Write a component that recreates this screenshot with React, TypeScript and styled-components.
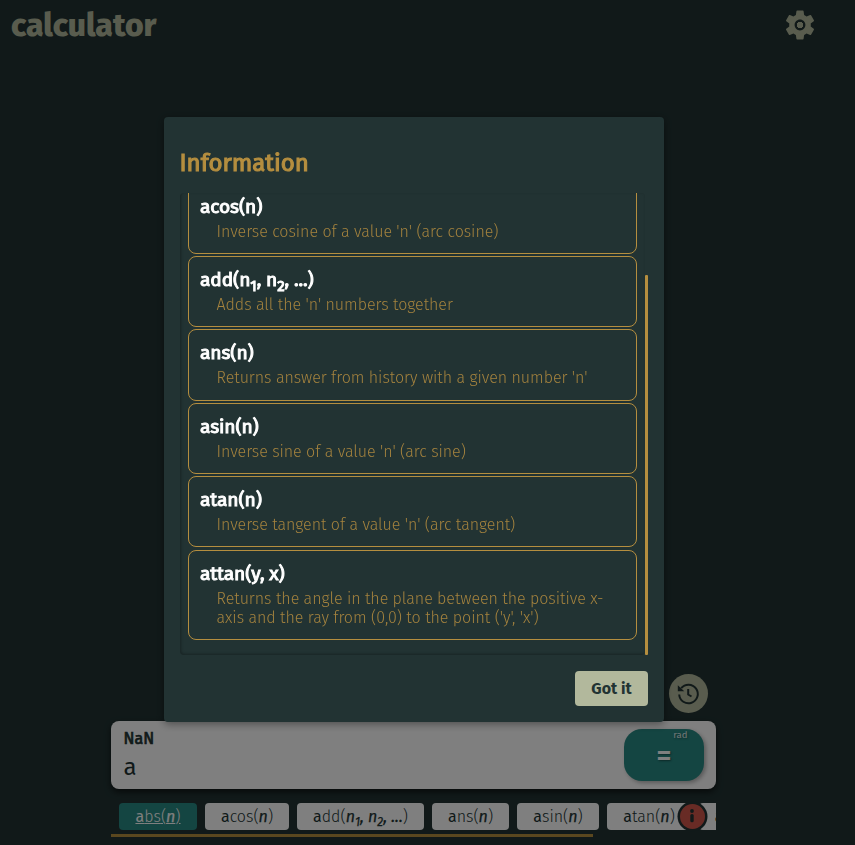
import React from 'react';
import styled, { createGlobalStyle } from 'styled-components';
import { MdSettings } from 'react-icons/md';

const palette = {
  bg: '#223333',
  gold: '#b58e3f',
  cream: '#b2b89c',
  teal: '#288a84',
  white: '#ffffff',
  red: '#d0564a',
};

const GlobalStyle = createGlobalStyle`
  * { box-sizing: border-box; }
  body {
    margin: 0;
    overflow: hidden;
    background: ${palette.bg};
    color: ${palette.bg};
    font-family: "Fira Sans", "Noto Sans", sans-serif;
    font-size: 16px;
  }
  button { font: inherit; border: 0; padding: 0; margin: 0; }
`;

const Page = styled.div`
  height: 845px;
  display: flex;
  flex-direction: column;
  justify-content: space-between;
`;

const Header = styled.header`
  display: flex;
  justify-content: space-between;
  padding: 6px 37px 0 11px;
`;

const Logo = styled.h1`
  margin: 0;
  font-size: 32px;
  line-height: 38px;
  font-weight: 800;
  color: ${palette.cream};
`;

const SettingsButton = styled.button`
  display: grid;
  place-items: center;
  width: 36px;
  height: 36px;
  margin-top: 1px;
  background: radial-gradient(circle at center, ${palette.cream} 3px, transparent 3.5px);
  color: ${palette.cream};
`;

const Calculator = styled.main`
  width: 605px;
  margin-left: 111px;
  display: flex;
  flex-direction: column;
  padding-bottom: 8px;
`;

const HistoryButton = styled.button`
  align-self: flex-end;
  display: grid;
  place-items: center;
  width: 39px;
  height: 39px;
  margin: 0 8px 8px 0;
  padding-right: 2px;
  border-radius: 50%;
  background: ${palette.cream};
  color: ${palette.bg};
`;

const Display = styled.section`
  height: 68px;
  display: flex;
  justify-content: space-between;
  padding: 8px 12px 8px 12.5px;
  border-radius: 8px;
  background: ${palette.white};
  box-shadow: 0 3px 6px rgba(0, 0, 0, 0.6);
`;

const Readout = styled.div`
  display: flex;
  flex-direction: column;
`;

const Result = styled.output`
  font-size: 16px;
  line-height: 20px;
  font-weight: 400;
  -webkit-text-stroke: 0.7px currentColor;
`;

const Entry = styled.div`
  margin-top: 3px;
  font-size: 24px;
  line-height: 30px;
`;

const EqualsButton = styled.button`
  position: relative;
  width: 80px;
  height: 52px;
  display: grid;
  place-items: center;
  border-radius: 18px;
  background: ${palette.teal};
  color: ${palette.white};
  font-size: 30px;
  font-weight: 500;
  box-shadow: 2px 2px 4px rgba(0, 0, 0, 0.3);
  text-shadow: 1px 1px 2px rgba(0, 0, 0, 0.4);
`;

const AngleMode = styled.span`
  position: absolute;
  top: 0;
  right: 16.5px;
  font-size: 9.6px;
  line-height: 13px;
  font-weight: 400;
  opacity: 0.85;
`;

const Suggestions = styled.nav`
  display: flex;
  gap: 8px;
  height: 27px;
  margin-top: 14px;
  padding-left: 8px;
  overflow: hidden;
`;

const Chip = styled.button<{ $width: number; $selected?: boolean }>`
  flex: 0 0 ${(p) => p.$width}px;
  border-radius: 4px;
  background: ${(p) => (p.$selected ? palette.teal : palette.white)};
  color: ${(p) => (p.$selected ? palette.white : palette.bg)};
  text-decoration: ${(p) => (p.$selected ? 'underline' : 'none')};
  font-weight: 300;
  line-height: 27px;
  white-space: nowrap;
  b { font-weight: 400; }
  i { font-weight: 400; -webkit-text-stroke: 0.25px currentColor; }
  sub { font-size: 12px; line-height: 0; }
`;

const ChipTrack = styled.div`
  height: 3px;
  margin-top: 4px;
`;

const ChipThumb = styled.div`
  width: 482px;
  height: 3px;
  background: ${palette.gold};
`;

const InfoButton = styled.button`
  position: absolute;
  left: 679.5px;
  top: 803.5px;
  width: 25px;
  height: 25px;
  display: grid;
  place-items: center;
  border-radius: 50%;
  background: ${palette.red};
  color: ${palette.bg};
  box-shadow: 0 0 0 2.5px ${palette.bg};
`;

const Overlay = styled.div`
  position: fixed;
  inset: 0;
  background: rgba(0, 0, 0, 0.5);
  padding: 117px 0 0 164px;
`;

const Dialog = styled.section`
  width: 500px;
  height: 605px;
  display: flex;
  flex-direction: column;
  padding: 31px 16px 16px;
  border-radius: 4px;
  background: ${palette.bg};
  box-shadow: 0 2px 8px rgba(0, 0, 0, 0.4);
`;

const DialogTitle = styled.h2`
  margin: 0 0 0 -0.5px;
  font-size: 24px;
  line-height: 30px;
  font-weight: 400;
  -webkit-text-stroke: 1.1px currentColor;
  color: ${palette.gold};
`;

const ScrollArea = styled.div`
  height: 462px;
  margin-top: 15px;
  display: flex;
  justify-content: space-between;
  align-items: flex-end;
`;

const List = styled.dl`
  width: 465px;
  height: 462px;
  margin: 0;
  padding: 0 8px 15px;
  display: flex;
  flex-direction: column;
  justify-content: flex-end;
  gap: 2.2px;
  overflow: hidden;
  border-radius: 4px;
  box-shadow: inset 1px -1px 3px rgba(0, 0, 0, 0.3);
`;

const ScrollThumb = styled.div`
  width: 3px;
  height: 380px;
  border-radius: 1px;
  background: ${palette.gold};
`;

const Entity = styled.div`
  flex: none;
  padding: 10px 11px 12px;
  border: 1px solid ${palette.gold};
  border-radius: 8px;
`;

const Name = styled.dt`
  font-size: 19.2px;
  line-height: 26px;
  font-weight: 400;
  letter-spacing: -0.12px;
  -webkit-text-stroke: 1px currentColor;
  color: ${palette.white};
  sub { font-size: 15px; line-height: 0; }
`;

const Description = styled.dd`
  margin: 2px 0 0 16.5px;
  font-size: 16px;
  line-height: 19.2px;
  font-weight: 300;
  letter-spacing: -0.035px;
  color: #a5833e;
`;

const ConfirmButton = styled.button`
  align-self: flex-end;
  width: 73px;
  height: 35px;
  margin-top: 16px;
  border-radius: 4px;
  background: ${palette.cream};
  color: ${palette.bg};
  font-weight: 700;
`;

const HistoryIcon = () => (
  <svg width="24" height="24" viewBox="0 0 24 24" fill="none" stroke="currentColor" strokeWidth="2">
    <path d="M3.2 12.5A9.3 9.3 0 1 0 5.2 6.2" />
    <path d="M12.2 7v5.5l3.3 2" />
    <path d="M1.8 3.2v6h6.5z" fill="currentColor" stroke="none" />
  </svg>
);

const InfoIcon = () => (
  <svg width="14" height="16" viewBox="0 0 14 16" fill="currentColor">
    <circle cx="7" cy="3" r="1.9" />
    <rect x="5.3" y="6" width="3.4" height="8.2" rx="1.5" />
  </svg>
);

const Series = () => (
  <>
    n<sub>1</sub>, n<sub>2</sub>, ...
  </>
);

const chips: { head: string; rest: string; args?: React.ReactNode; width: number }[] = [
  { head: 'a', rest: 'bs', width: 78 },
  { head: 'a', rest: 'cos', width: 84 },
  { head: 'a', rest: 'dd', args: <Series />, width: 127 },
  { head: 'a', rest: 'ns', width: 77 },
  { head: 'a', rest: 'sin', width: 82 },
  { head: 'a', rest: 'tan', width: 84 },
  { head: 'a', rest: 'ttan', args: 'y, x', width: 102 },
];

const entries: { name: React.ReactNode; text: string }[] = [
  { name: 'acos(n)', text: "Inverse cosine of a value 'n' (arc cosine)" },
  { name: <>add(<Series />)</>, text: "Adds all the 'n' numbers together" },
  { name: 'ans(n)', text: "Returns answer from history with a given number 'n'" },
  { name: 'asin(n)', text: "Inverse sine of a value 'n' (arc sine)" },
  { name: 'atan(n)', text: "Inverse tangent of a value 'n' (arc tangent)" },
  {
    name: 'attan(y, x)',
    text: "Returns the angle in the plane between the positive x-axis and the ray from (0,0) to the point ('y', 'x')",
  },
];

export default function App() {
  return (
    <>
      <GlobalStyle />
      <Page>
        <Header>
          <Logo>calculator</Logo>
          <SettingsButton aria-label="Settings">
            <MdSettings size={36} />
          </SettingsButton>
        </Header>
        <Calculator>
          <HistoryButton aria-label="History">
            <HistoryIcon />
          </HistoryButton>
          <Display>
            <Readout>
              <Result>NaN</Result>
              <Entry>a</Entry>
            </Readout>
            <EqualsButton>
              =<AngleMode>rad</AngleMode>
            </EqualsButton>
          </Display>
          <Suggestions>
            {chips.map((c, i) => (
              <Chip key={i} $width={c.width} $selected={i === 0}>
                <b>{c.head}</b>
                {c.rest}(<i>{c.args ?? 'n'}</i>)
              </Chip>
            ))}
          </Suggestions>
          <ChipTrack>
            <ChipThumb />
          </ChipTrack>
        </Calculator>
      </Page>
      <InfoButton aria-label="Function information">
        <InfoIcon />
      </InfoButton>
      <Overlay>
        <Dialog role="dialog">
          <DialogTitle>Information</DialogTitle>
          <ScrollArea>
            <List>
              {entries.map((e, i) => (
                <Entity key={i}>
                  <Name>{e.name}</Name>
                  <Description>{e.text}</Description>
                </Entity>
              ))}
            </List>
            <ScrollThumb />
          </ScrollArea>
          <ConfirmButton>Got it</ConfirmButton>
        </Dialog>
      </Overlay>
    </>
  );
}
